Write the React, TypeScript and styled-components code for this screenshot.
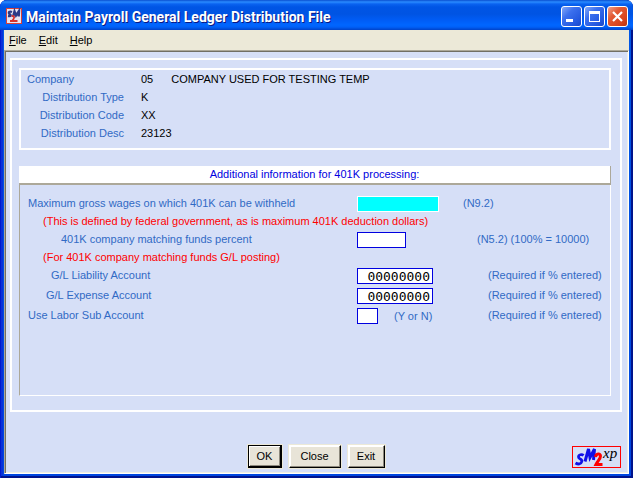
import React from "react";
import styled, { createGlobalStyle, css } from "styled-components";

const GlobalStyle = createGlobalStyle`
  * { box-sizing: border-box; }
  body { margin: 0; background: #fff; }
  button, input { font: inherit; color: inherit; }
`;

const Frame = styled.div`
  min-height: 100vh;
  display: flex;
  flex-direction: column;
  padding: 0 4px 4px;
  border-radius: 7px 7px 0 0;
  background: linear-gradient(#0058e6, #0046e0);
  box-shadow: inset 1px 0 #0019cf, inset -2px 0 #00138c, inset 0 -2px #00138c, inset 3px 0 #0831d9;
  font: 11px/18px "Liberation Sans", Arial, sans-serif;
  color: #000;
`;

const TitleBar = styled.header`
  height: 30px;
  margin: 0 -4px;
  padding: 2px 5px 0 6px;
  display: flex;
  align-items: center;
  border-radius: 7px 7px 0 0;
  background: linear-gradient(
    #0a4fd0 0, #2a8bff 2px, #0a63f0 4px, #0055e5 7px, #0054e3 14px,
    #005cf5 20px, #0066ff 25px, #0060f8 27px, #0042c8 30px
  );
`;

const Title = styled.h1`
  flex: 1;
  margin: 2px 0 0 4px;
  font: bold 14px/20px Roboto, "Liberation Sans", sans-serif;
  color: #fff;
  text-shadow: 1px 1px #0a1883;
  white-space: nowrap;
`;

const Captions = styled.div`
  display: flex;
  gap: 2px;
`;

const CaptionButton = styled.button<{ $close?: boolean }>`
  width: 21px;
  height: 21px;
  padding: 0;
  display: grid;
  place-items: center;
  border: 1px solid #fff;
  border-radius: 3px;
  background: ${(p) =>
    p.$close
      ? "linear-gradient(135deg, #f0a08c, #e35a34 35%, #d8431c 75%, #b8340f)"
      : "linear-gradient(135deg, #84a8f8, #3c70ee 35%, #2459e0 75%, #1a48c8)"};
`;

const MenuBar = styled.nav`
  display: flex;
  gap: 12px;
  height: 20px;
  padding-left: 5px;
  background: #ece9d8;
`;

const MenuButton = styled.button`
  padding: 0;
  border: 0;
  background: none;
`;

const Client = styled.main`
  flex: 1;
  display: flex;
  flex-direction: column;
  padding: 6px 6px 0 4px;
  background: #d6dff7;
  border: 1px solid;
  border-color: #aca899 #fff #fff #aca899;
  box-shadow: inset 1px 1px #716f64, inset -1px -1px #f1efe2;
`;

const OuterGroup = styled.form`
  flex: 1;
  display: flex;
  flex-direction: column;
  padding: 8px 9px 14px 7px;
  margin: 1px 0 0 1px;
  border: 2px solid #fff;
`;

const Summary = styled.dl`
  display: grid;
  grid-template-columns: 97px 1fr;
  column-gap: 17px;
  margin: 0;
  padding: 0 6px 6px;
  border: 2px solid #fff;
`;

const Term = styled.dt<{ $main?: boolean }>`
  color: #316ac5;
  text-align: ${(p) => (p.$main ? "left" : "right")};
  white-space: nowrap;
`;

const Value = styled.dd`
  display: flex;
  gap: 18px;
  margin: 0;
`;

const SectionTitle = styled.h2`
  margin: 16px 0 0;
  height: 19px;
  font: inherit;
  line-height: 17px;
  text-align: center;
  color: #0000e0;
  background: #fff;
  border: solid #aca899;
  border-width: 0 1px 2px 0;
`;

const Panel = styled.section`
  flex: 1;
  display: flex;
  flex-direction: column;
  padding: 9px 0 0 8px;
  border: solid #fff;
  border-width: 0 1px 1px 0;
  border-left: 1px solid #aca899;
`;

const Row = styled.div<{ $spaced?: boolean }>`
  display: grid;
  grid-template-columns: 329px 1fr 147px;
  align-items: center;
  height: 18px;
  margin-top: ${(p) => (p.$spaced ? "2px" : "0")};
  color: #316ac5;
`;

const Label = styled.label<{ $indent?: number }>`
  padding-left: ${(p) => p.$indent ?? 0}px;
  white-space: nowrap;
`;

const Hint = styled.p`
  margin: 0;
  padding-left: 15px;
  color: #f00;
`;

const FieldCell = styled.div`
  align-self: end;
  display: flex;
  align-items: center;
  gap: 16px;
  line-height: 16px;
`;

const Field = styled.input<{ $width: number; $active?: boolean }>`
  width: ${(p) => p.$width}px;
  height: 16px;
  padding: 0 2px;
  border: 1px solid #0000e0;
  border-radius: 0;
  outline: 0;
  background: #fff;
  color: #000;
  font: 13px/14px "DejaVu Sans Mono", monospace;
  text-align: right;
  ${(p) =>
    p.$active &&
    css`
      background: #0ff;
      border-color: #fff;
    `}
`;

const Note = styled.span<{ $indent?: number }>`
  padding-left: ${(p) => p.$indent ?? 0}px;
  white-space: nowrap;
`;

const Footer = styled.footer`
  display: grid;
  grid-template-columns: 1fr auto 1fr;
  align-items: center;
  padding: 33px 1px 5px 2px;
`;

const Actions = styled.div`
  grid-column: 2;
  display: flex;
  gap: 7px;
`;

const ActionButton = styled.button<{ $width: number; $primary?: boolean }>`
  width: ${(p) => p.$width}px;
  height: 23px;
  padding: 0;
  line-height: 19px;
  background: #e8e4d8;
  border: 1px solid;
  border-color: ${(p) => (p.$primary ? "#000" : "#fff #000 #000 #fff")};
  box-shadow: ${(p) =>
    p.$primary
      ? "inset -1px -1px #000, inset 1px 1px #fff, inset -2px -2px #8c887c, 0 0 0 1px #ece9d8"
      : "inset -1px -1px #8c887c, inset 1px 1px #fff, 0 0 0 1px #ece9d8"};
`;

const LogoSlot = styled.div`
  justify-self: end;
  height: 22px;
`;

const Brand = styled.svg`
  display: block;
  overflow: visible;
`;

const AppIcon = () => (
  <svg width="16" height="16" viewBox="0 0 16 16" aria-hidden="true">
    <rect width="16" height="16" fill="#d8413a" />
    <rect x="1" y="1" width="14" height="14" fill="#e8e4f0" />
    <path d="M6 4C3.500 3 2 4.500 3.500 5.800S5.500 8.500 2 8" fill="none" stroke="#2b3a86" strokeWidth="2.400" />
    <path d="M7 9 8.500 3.500l1.500 4L13 3l-.3 5.500" fill="none" stroke="#2b3a86" strokeWidth="2.400" />
    <path d="M5.500 8.500c2-1.500 3.500 0 2 2.500L6.500 12.500M4 13h7.500" fill="none" stroke="#d8322c" strokeWidth="1.800" />
  </svg>
);

const BrandLogo = () => (
  <Brand width="49" height="22" viewBox="0 0 49 22" role="img" aria-label="SM2 xp">
    <rect x="0.500" y="0.500" width="48" height="21" fill="none" stroke="#f00" />
    <path
      d="M11.500 9.500C10 8 6.500 8.500 6.500 11S10.500 12.500 9.800 15.500 6 18.500 3.500 17"
      fill="none"
      stroke="#1010e8"
      strokeWidth="2.800"
    />
    <path d="M13 15.500 16.500 3l1.500 8.500L22.500 3l-1 11" fill="none" stroke="#1010e8" strokeWidth="3" />
    <path
      d="M23.500 11C24 7.500 28.500 7 28.500 10S26 14.500 24 18.500H30.500"
      fill="none"
      stroke="#f00"
      strokeWidth="3"
    />
    <text x="31" y="12" fontFamily="Liberation Serif, serif" fontStyle="italic" fontSize="15" fill="#000">
      xp
    </text>
  </Brand>
);

const MENUS = ["File", "Edit", "Help"];

const SUMMARY = [
  { term: "Company", values: ["05", "COMPANY USED FOR TESTING TEMP"], main: true },
  { term: "Distribution Type", values: ["K"] },
  { term: "Distribution Code", values: ["XX"] },
  { term: "Distribution Desc", values: ["23123"] },
];

export default function App() {
  return (
    <>
      <GlobalStyle />
      <Frame>
        <TitleBar>
          <AppIcon />
          <Title>Maintain Payroll General Ledger Distribution File</Title>
          <Captions>
            <CaptionButton aria-label="Minimize">
              <svg width="19" height="19" viewBox="0 0 19 19">
                <rect x="4" y="12" width="7" height="3" fill="#fff" />
              </svg>
            </CaptionButton>
            <CaptionButton aria-label="Maximize">
              <svg width="19" height="19" viewBox="0 0 19 19">
                <path d="M4 4h11v11H4zM5 7v7h9V7z" fill="#fff" fillRule="evenodd" />
              </svg>
            </CaptionButton>
            <CaptionButton $close aria-label="Close window">
              <svg width="19" height="19" viewBox="0 0 19 19">
                <path d="M5 5l9 9M14 5l-9 9" stroke="#fff" strokeWidth="2.200" />
              </svg>
            </CaptionButton>
          </Captions>
        </TitleBar>
        <MenuBar>
          {MENUS.map((name) => (
            <MenuButton key={name}>
              <u>{name[0]}</u>
              {name.slice(1)}
            </MenuButton>
          ))}
        </MenuBar>
        <Client>
          <OuterGroup id="distribution" onSubmit={(e) => e.preventDefault()}>
            <Summary>
              {SUMMARY.map(({ term, values, main }) => (
                <React.Fragment key={term}>
                  <Term $main={main}>{term}</Term>
                  <Value>
                    {values.map((v) => (
                      <span key={v}>{v}</span>
                    ))}
                  </Value>
                </React.Fragment>
              ))}
            </Summary>
            <SectionTitle>Additional information for 401K processing:</SectionTitle>
            <Panel>
              <Row>
                <Label htmlFor="wages">Maximum gross wages on which 401K can be withheld</Label>
                <FieldCell>
                  <Field id="wages" $width={82} $active />
                </FieldCell>
                <Note>(N9.2)</Note>
              </Row>
              <Hint>(This is defined by federal government, as is maximum 401K deduction dollars)</Hint>
              <Row>
                <Label htmlFor="percent" $indent={33}>401K company matching funds percent</Label>
                <FieldCell>
                  <Field id="percent" $width={49} />
                </FieldCell>
                <Note $indent={14}>(N5.2) (100% = 10000)</Note>
              </Row>
              <Hint>(For 401K company matching funds G/L posting)</Hint>
              <Row>
                <Label htmlFor="liability" $indent={23}>G/L Liability Account</Label>
                <FieldCell>
                  <Field id="liability" $width={76} defaultValue="00000000" />
                </FieldCell>
                <Note $indent={25}>(Required if % entered)</Note>
              </Row>
              <Row $spaced>
                <Label htmlFor="expense" $indent={18}>G/L Expense Account</Label>
                <FieldCell>
                  <Field id="expense" $width={76} defaultValue="00000000" />
                </FieldCell>
                <Note $indent={25}>(Required if % entered)</Note>
              </Row>
              <Row $spaced>
                <Label htmlFor="labor">Use Labor Sub Account</Label>
                <FieldCell>
                  <Field id="labor" $width={21} />
                  <span>(Y or N)</span>
                </FieldCell>
                <Note $indent={25}>(Required if % entered)</Note>
              </Row>
            </Panel>
          </OuterGroup>
          <Footer>
            <Actions>
              <ActionButton type="submit" form="distribution" $width={34} $primary>OK</ActionButton>
              <ActionButton type="button" $width={52}>Close</ActionButton>
              <ActionButton type="button" $width={37}>Exit</ActionButton>
            </Actions>
            <LogoSlot>
              <BrandLogo />
            </LogoSlot>
          </Footer>
        </Client>
      </Frame>
    </>
  );
}
